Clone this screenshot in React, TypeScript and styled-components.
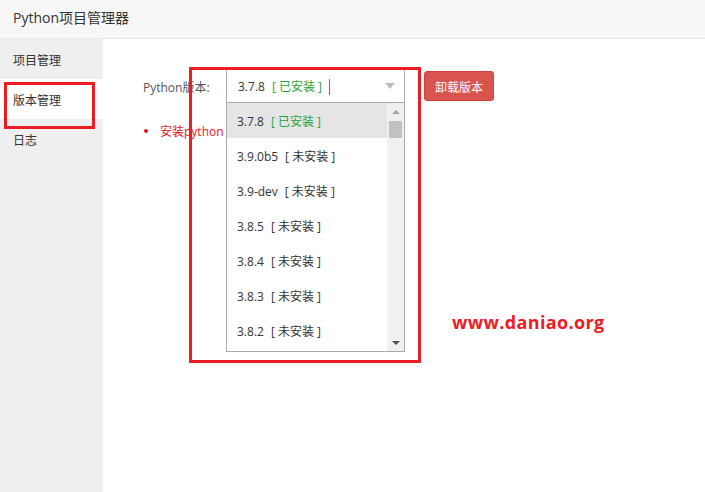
import React from "react";
import styled, { createGlobalStyle } from "styled-components";

const Global = createGlobalStyle`
  html, body { margin: 0; padding: 0; background: #fff; }
  body { font-family: "Open Sans", "Noto Sans CJK SC", sans-serif; color: #333; }
  * { box-sizing: border-box; }
`;

const Page = styled.div`
  position: relative;
  width: 705px;
  height: 492px;
  display: flex;
  flex-direction: column;
  overflow: hidden;
`;

const Header = styled.header`
  flex: none;
  height: 39px;
  background: #f7f7f7;
  border-bottom: 1px solid #e6e6e6;
  display: flex;
  align-items: center;
  padding: 0 0 2px 13px;
  font-size: 14px;
  line-height: 20px;
  color: #333;
`;

const Body = styled.div`
  flex: 1;
  display: flex;
`;

const Sidebar = styled.nav`
  width: 103px;
  flex: none;
  background: #efefef;
  display: flex;
  flex-direction: column;
`;

const NavItem = styled.div<{ $active?: boolean }>`
  height: 40px;
  display: flex;
  align-items: center;
  padding: 3px 0 0 13px;
  font-size: 12px;
  line-height: 16px;
  color: #333;
  background: ${(p) => (p.$active ? "#fff" : "transparent")};
`;

const Main = styled.main`
  flex: 1;
  padding: 30px 0 0 40px;
`;

const FormRow = styled.div`
  display: flex;
  align-items: center;
  height: 34px;
`;

const Label = styled.label`
  width: 83px;
  padding-top: 3px;
  font-size: 12px;
  line-height: 16px;
  color: #555;
`;

const SelectWrap = styled.div`
  position: relative;
  width: 179px;
  height: 34px;
`;

const SelectBox = styled.div`
  height: 34px;
  border: 1px solid #a9a9a9;
  background: #fff;
  display: flex;
  align-items: center;
  padding: 2px 9px 0 11px;
  font-size: 12px;
  line-height: 16px;
`;

const Caret = styled.span`
  width: 1px;
  height: 16px;
  background: #22a83a;
  margin-left: 7px;
`;

const ArrowDown = styled.span`
  margin: 0 0 2px auto;
  width: 0;
  height: 0;
  border-left: 5px solid transparent;
  border-right: 5px solid transparent;
  border-top: 6px solid #bdbdbd;
`;

const Status = styled.span<{ $installed?: boolean }>`
  margin-left: 7px;
  color: ${(p) => (p.$installed ? "#25a43a" : "#333")};
  white-space: pre;
`;

const Dropdown = styled.div`
  position: absolute;
  left: 0;
  top: 33px;
  width: 179px;
  height: 250px;
  border: 1px solid #a9a9a9;
  background: #fff;
  display: flex;
  z-index: 2;
`;

const Options = styled.div`
  flex: 1;
  display: flex;
  flex-direction: column;
  overflow: hidden;
`;

const Option = styled.div<{ $selected?: boolean }>`
  flex: none;
  height: 35px;
  display: flex;
  align-items: center;
  padding: 2px 0 0 10px;
  font-size: 12px;
  line-height: 16px;
  color: #333;
  background: ${(p) => (p.$selected ? "#e5e5e5" : "#fff")};
`;

const Scrollbar = styled.div`
  width: 17px;
  flex: none;
  background: #f0f0f0;
  display: flex;
  flex-direction: column;
`;

const ScrollBtn = styled.div`
  height: 17px;
  display: flex;
  align-items: center;
  justify-content: center;
`;

const TriUp = styled.span`
  width: 0;
  height: 0;
  border-left: 4px solid transparent;
  border-right: 4px solid transparent;
  border-bottom: 4px solid #a3a3a3;
`;

const TriDown = styled.span`
  width: 0;
  height: 0;
  border-left: 4px solid transparent;
  border-right: 4px solid transparent;
  border-top: 4px solid #505050;
`;

const Track = styled.div`
  flex: 1;
  padding: 1px 2px 0;
`;

const Thumb = styled.div`
  height: 17px;
  background: #c1c1c1;
`;

const DangerButton = styled.button`
  margin-left: 19px;
  width: 70px;
  height: 30px;
  background: #d9534f;
  border: 1px solid #d43f3a;
  border-radius: 3px;
  color: #fff;
  font-family: inherit;
  font-size: 12px;
  line-height: 16px;
  padding: 3px 0 0;
`;

const Notes = styled.ul`
  list-style: none;
  margin: 18px 0 0;
  padding: 0;
`;

const Note = styled.li`
  display: flex;
  align-items: center;
  height: 20px;
  padding-top: 2px;
  font-size: 12px;
  line-height: 16px;
  color: #f0131e;
`;

const Dot = styled.span`
  width: 4px;
  height: 4px;
  border-radius: 50%;
  background: #f0131e;
  margin: 0 12px 2px 1px;
`;

const Annotation = styled.div<{ $l: number; $t: number; $w: number; $h: number }>`
  position: absolute;
  left: ${(p) => p.$l}px;
  top: ${(p) => p.$t}px;
  width: ${(p) => p.$w}px;
  height: ${(p) => p.$h}px;
  border: 3px solid #ec1c24;
  pointer-events: none;
  z-index: 3;
`;

const Watermark = styled.div`
  position: absolute;
  left: 452px;
  top: 311px;
  font-family: "Open Sans", sans-serif;
  font-weight: 700;
  font-size: 18px;
  line-height: 22px;
  color: #ec1c24;
  letter-spacing: 0.35px;
`;

const versions: { v: string; installed: boolean }[] = [
  { v: "3.7.8", installed: true },
  { v: "3.9.0b5", installed: false },
  { v: "3.9-dev", installed: false },
  { v: "3.8.5", installed: false },
  { v: "3.8.4", installed: false },
  { v: "3.8.3", installed: false },
  { v: "3.8.2", installed: false },
];

export default function App() {
  return (
    <Page>
      <Global />
      <Header>Python项目管理器</Header>
      <Body>
        <Sidebar>
          <NavItem>项目管理</NavItem>
          <NavItem $active>版本管理</NavItem>
          <NavItem>日志</NavItem>
        </Sidebar>
        <Main>
          <FormRow>
            <Label>Python版本:</Label>
            <SelectWrap>
              <SelectBox>
                <span>3.7.8</span>
                <Status $installed>{"[ 已安装 ]"}</Status>
                <Caret />
                <ArrowDown />
              </SelectBox>
              <Dropdown>
                <Options>
                  {versions.map((item, i) => (
                    <Option key={item.v} $selected={i === 0}>
                      <span>{item.v}</span>
                      <Status $installed={item.installed}>
                        {item.installed ? "[ 已安装 ]" : "[ 未安装 ]"}
                      </Status>
                    </Option>
                  ))}
                </Options>
                <Scrollbar>
                  <ScrollBtn>
                    <TriUp />
                  </ScrollBtn>
                  <Track>
                    <Thumb />
                  </Track>
                  <ScrollBtn>
                    <TriDown />
                  </ScrollBtn>
                </Scrollbar>
              </Dropdown>
            </SelectWrap>
            <DangerButton>卸载版本</DangerButton>
          </FormRow>
          <Notes>
            <Note>
              <Dot />
              安装python
            </Note>
          </Notes>
        </Main>
      </Body>
      <Annotation $l={4} $t={82} $w={91} $h={47} />
      <Annotation $l={189} $t={67} $w={232} $h={296} />
      <Watermark>www.daniao.org</Watermark>
    </Page>
  );
}
